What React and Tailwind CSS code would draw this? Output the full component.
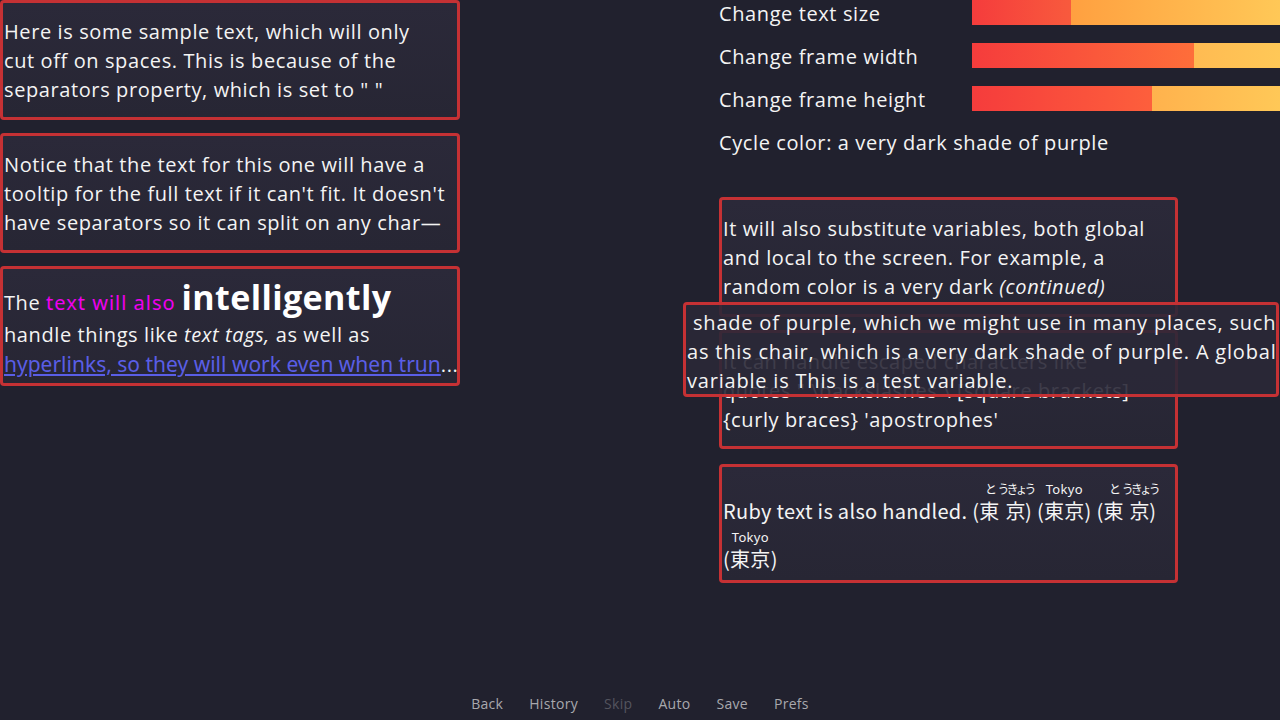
import React from "react";

const MAIN = "font-['Open_Sans',sans-serif] tracking-[0.6px]";

const sliders = [
    { label: "Change text size", value: 32, fill: "#f85a3d", rest: "#ffa040" },
    { label: "Change frame width", value: 72, fill: "#fe6e3a", rest: "#ffbb52" },
    { label: "Change frame height", value: 58.5, fill: "#fd5f3c", rest: "#ffb24d" },
];

const Box = ({ children, className = "" }) => (
    <div className={`border-[3px] border-[#c53134] rounded-[4px] bg-gradient-to-b from-[#2b2939] to-[#272634] h-[120px] px-[1px] pt-[14px] text-[20px] leading-[29px] text-[#f4f4f4] whitespace-nowrap overflow-hidden ${className}`}>
        {children}
    </div>
);

const Bar = ({ value, fill, rest }) => (
    <div className="w-[308px] h-[25px] flex">
        <div style={{ width: `${value}%`, background: `linear-gradient(to right, #f53c3c, ${fill})` }} />
        <div className="flex-1" style={{ background: `linear-gradient(to right, ${rest}, #ffc857)` }} />
    </div>
);

const rt = "text-[12px] tracking-[-3px] pb-[3px]";

const Tokyo = ({ kana }) => (
    <span className="whitespace-nowrap">
        (
        {kana ? (
            <>
                <ruby>東<rt className={rt}>と</rt></ruby>
                <ruby className="-ml-[2px] -mr-[5px]">京<rt className={rt}>うきょう</rt></ruby>
            </>
        ) : (
            <ruby>
                東京<rt className="text-[13px] pb-[3px] font-['Noto_Sans',sans-serif]">Tokyo</rt>
            </ruby>
        )}
        )
    </span>
);

export default function App() {
    return (
        <div className={`relative w-[1280px] h-[720px] bg-[#21212e] flex flex-col overflow-hidden ${MAIN}`}>
            <div className="flex flex-1">
                {/* left column */}
                <div className="w-[460px] flex flex-col gap-[13px]">
                    <Box>
                        <div>Here is some sample text, which will only</div>
                        <div>cut off on spaces. This is because of the</div>
                        <div>separators property, which is set to " "</div>
                    </Box>
                    <Box>
                        <div>Notice that the text for this one will have a</div>
                        <div>tooltip for the full text if it can't fit. It doesn't</div>
                        <div>have separators so it can split on any char—</div>
                    </Box>
                    <Box className="!pt-[10px]">
                        <div className="leading-[36px]">
                            The{" "}
                            <span className="text-[#ee00ee] font-['Noto_Sans',sans-serif] tracking-[1px]">text will also</span>{" "}
                            <span className="text-[34px] font-bold text-white tracking-[0.4px]">intelligently</span>
                        </div>
                        <div className="leading-[28px]">handle things like <i>text tags,</i> as well as</div>
                        <div className="leading-[30px]">
                            <span className="text-[#5a5ee6] underline font-['Noto_Sans',sans-serif] text-[21px] tracking-normal">hyperlinks, so they will work even when trun</span>...
                        </div>
                    </Box>
                </div>

                {/* right column */}
                <div className="ml-[259px] w-[561px] flex flex-col">
                    <div className="flex flex-col gap-[18px]">
                        {sliders.map((s) => (
                            <div key={s.label} className="flex items-center h-[25px] text-[20px] text-[#f4f4f4]">
                                <div className="w-[253px] pt-[2px]">{s.label}</div>
                                <Bar value={s.value} fill={s.fill} rest={s.rest} />
                            </div>
                        ))}
                    </div>
                    <div className="mt-[17px] h-[29px] leading-[29px] text-[20px] text-[#f4f4f4]">Cycle color: a very dark shade of purple</div>

                    <div className="mt-[40px] w-[459px] flex flex-col gap-[13px]">
                        <Box>
                            <div>It will also substitute variables, both global</div>
                            <div>and local to the screen. For example, a</div>
                            <div>random color is a very dark <i>(continued)</i></div>
                        </Box>
                        <Box className="!h-[119px]">
                            <div>It can handle escaped characters like</div>
                            <div>quotes " \backslashes \ [square brackets]</div>
                            <div>{"{curly braces} 'apostrophes'"}</div>
                        </Box>
                        <Box className="!mt-[2px] !h-[119px] !pt-[13px] font-['Noto_Sans_CJK_JP',sans-serif] !leading-[48px] !tracking-[0.3px]">
                            <div className="whitespace-normal">
                                Ruby text is also handled. <Tokyo kana /> <Tokyo /> <Tokyo kana /> <Tokyo />
                            </div>
                        </Box>
                    </div>
                </div>
            </div>

            {/* quick menu */}
            <div className="h-[32px] flex justify-center items-center gap-[26px] text-[14px] tracking-[0.3px] text-[#a8a8ad] pb-[1px]">
                <span>Back</span>
                <span>History</span>
                <span className="text-[#54545e]">Skip</span>
                <span>Auto</span>
                <span>Save</span>
                <span>Prefs</span>
            </div>

            {/* tooltip overlay */}
            <div className="absolute left-[683px] top-[302px] w-[596px] h-[95px] border-[3px] border-[#c53134] rounded-[4px] bg-[#2a2837]/90 px-[1px] pt-[3px] text-[20px] leading-[29px] tracking-[0.8px] text-[#f4f4f4] whitespace-pre">
                <div> shade of purple, which we might use in many places, such</div>
                <div>as this chair, which is a very dark shade of purple. A global</div>
                <div>variable is This is a test variable.</div>
            </div>
        </div>
    );
}
